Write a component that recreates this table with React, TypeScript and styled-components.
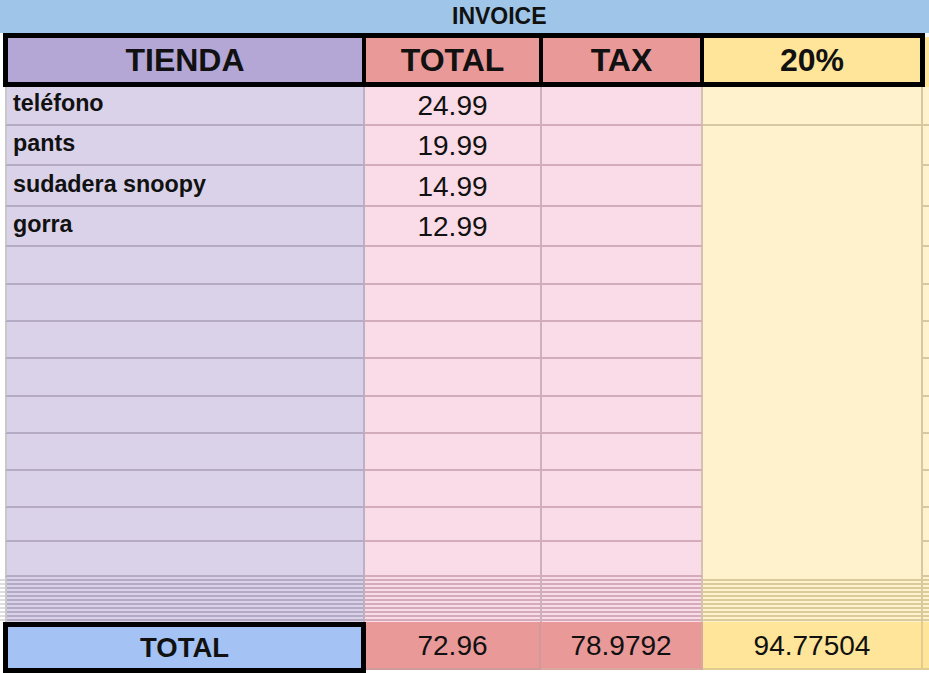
import React from 'react';
import styled, { createGlobalStyle } from 'styled-components';

const Global = createGlobalStyle`
  html, body { margin: 0; padding: 0; background: #ffffff; }
  body { font-family: "Liberation Sans", Arial, sans-serif; color: #111; }
  * { box-sizing: border-box; }
`;

const COLS = '5px 360px 177px 161px 220px 1fr';

const C = {
  blue: '#9fc5e8',
  purpleHead: '#b4a7d6',
  purple: '#d9d2e9',
  purpleLine: '#b6abc4',
  redHead: '#ea9999',
  pink: '#fadce8',
  pinkLine: '#d2acbb',
  yellowHead: '#ffe599',
  yellow: '#fff2cc',
  yellowLine: '#d8c8a0',
  totalBlue: '#a4c2f4',
  gutterLine: '#c9c9c9',
};

const Sheet = styled.div`
  width: 929px;
  height: 673px;
  overflow: hidden;
  display: flex;
  flex-direction: column;
  background: #fff;
`;

const TopBar = styled.div`
  flex: none;
  height: 33px;
  background: ${C.blue};
  display: flex;
  align-items: flex-end;
  padding: 0 0 5px 452px;
  font-size: 23px;
  line-height: 1;
  font-weight: 700;
  color: #111;
`;

const HeaderLine = styled.div`
  flex: none;
  height: 54px;
  display: flex;
`;

const Spacer = styled.div<{ $w: number }>`
  flex: none;
  width: ${(p) => p.$w}px;
`;

const HeaderGrid = styled.div`
  display: grid;
  grid-template-columns: 354px 173px 157px 216px;
  gap: 4px;
  padding: 5px;
  background: #000;
`;

const HeadCell = styled.div<{ $bg: string }>`
  background: ${(p) => p.$bg};
  display: flex;
  align-items: center;
  justify-content: center;
  font-size: 32px;
  line-height: 1;
  font-weight: 700;
  color: #111;
`;

const HeaderTail = styled.div`
  flex: 1;
  margin-top: 4px;
  background: ${C.yellowHead};
`;

const Body = styled.div<{ $rows: string }>`
  flex: none;
  display: grid;
  grid-template-columns: ${COLS};
  grid-template-rows: ${(p) => p.$rows};
`;

const Cell = styled.div<{ $bg: string; $h: string; $v?: string; $left?: boolean; $span?: number }>`
  background: ${(p) => p.$bg};
  border-bottom: 2px solid ${(p) => p.$h};
  ${(p) => (p.$v ? `border-right: 2px solid ${p.$v};` : '')}
  ${(p) => (p.$left ? `border-left: 2px solid ${C.gutterLine};` : '')}
  ${(p) => (p.$span ? `grid-row: span ${p.$span}; border-bottom: none;` : '')}
  display: flex;
  align-items: flex-end;
  min-width: 0;
`;

const GutterCell = styled.div`
  background: #fff;
`;

const Label = styled.span`
  font-size: 23.3px;
  line-height: 1;
  font-weight: 700;
  padding: 0 0 9px 6px;
  white-space: nowrap;
`;

const Num = styled.span`
  flex: 1;
  text-align: center;
  font-size: 28px;
  line-height: 1;
  font-weight: 400;
  padding-bottom: 4px;
`;

const Band = styled.div`
  flex: none;
  height: 45px;
  display: grid;
  grid-template-columns: ${COLS};
`;

const Stripe = styled.div<{ $bg: string; $line: string; $v?: string; $left?: boolean }>`
  background: repeating-linear-gradient(
    to bottom,
    ${(p) => p.$bg} 0 2px,
    ${(p) => p.$line} 2px 4px
  );
  ${(p) => (p.$v ? `border-right: 2px solid ${p.$v};` : '')}
  ${(p) => (p.$left ? `border-left: 2px solid ${C.gutterLine};` : '')}
`;

const TotalRow = styled.div`
  flex: none;
  height: 51px;
  display: grid;
  grid-template-columns: 3px 363px 175px 162px 220px 1fr;
  align-items: start;
`;

const TotalLabel = styled.div`
  height: 51px;
  border: 5px solid #000;
  background: ${C.totalBlue};
  display: flex;
  align-items: center;
  justify-content: center;
  font-size: 27.5px;
  line-height: 1;
  font-weight: 700;
`;

const TotalCell = styled.div<{ $bg: string; $line: string; $noRight?: boolean }>`
  height: 48px;
  background: ${(p) => p.$bg};
  border-bottom: 2px solid ${(p) => p.$line};
  ${(p) => (p.$noRight ? '' : `border-right: 2px solid ${p.$line};`)}
  display: flex;
  align-items: center;
  justify-content: center;
  font-size: 28px;
  line-height: 1;
  padding-top: 1px;
`;

type Row = { label?: string; total?: string; h: number };

const rows: Row[] = [
  { label: 'teléfono', total: '24.99', h: 39 },
  { label: 'pants', total: '19.99', h: 40 },
  { label: 'sudadera snoopy', total: '14.99', h: 41 },
  { label: 'gorra', total: '12.99', h: 40 },
  { h: 38 },
  { h: 37 },
  { h: 37 },
  { h: 38 },
  { h: 37 },
  { h: 37 },
  { h: 37 },
  { h: 34 },
  { h: 35 },
];

export default function App() {
  return (
    <>
      <Global />
      <Sheet>
        <TopBar>INVOICE</TopBar>
        <HeaderLine>
          <Spacer $w={3} />
          <HeaderGrid>
            <HeadCell $bg={C.purpleHead}>TIENDA</HeadCell>
            <HeadCell $bg={C.redHead}>TOTAL</HeadCell>
            <HeadCell $bg={C.redHead}>TAX</HeadCell>
            <HeadCell $bg={C.yellowHead}>20%</HeadCell>
          </HeaderGrid>
          <HeaderTail />
        </HeaderLine>
        <Body $rows={rows.map((r) => `${r.h}px`).join(' ')}>
          {rows.map((r, i) => (
            <React.Fragment key={i}>
              <GutterCell />
              <Cell $bg={C.purple} $h={C.purpleLine} $v="#bcb0c2" $left>
                {r.label && <Label>{r.label}</Label>}
              </Cell>
              <Cell $bg={C.pink} $h={C.pinkLine} $v="#ccb0bc">
                {r.total && <Num>{r.total}</Num>}
              </Cell>
              <Cell $bg={C.pink} $h={C.pinkLine} $v="#d4c2ae" />
              {i === 0 && <Cell $bg={C.yellow} $h={C.yellowLine} $v={C.yellowLine} />}
              {i === 1 && <Cell $bg={C.yellow} $h={C.yellowLine} $v={C.yellowLine} $span={rows.length - 1} />}
              <Cell $bg={C.yellow} $h={C.yellowLine} />
            </React.Fragment>
          ))}
        </Body>
        <Band>
          <Stripe $bg="#ffffff" $line="#dddddd" />
          <Stripe $bg={C.purple} $line="#b4aac4" $v="#bcb0c2" $left />
          <Stripe $bg={C.pink} $line="#d3abbb" $v="#ccb0bc" />
          <Stripe $bg={C.pink} $line="#d3abbb" $v="#d4c2ae" />
          <Stripe $bg={C.yellow} $line="#dbca9c" $v={C.yellowLine} />
          <Stripe $bg={C.yellow} $line="#dbca9c" />
        </Band>
        <TotalRow>
          <span />
          <TotalLabel>TOTAL</TotalLabel>
          <TotalCell $bg={C.redHead} $line="#cf9b9b">72.96</TotalCell>
          <TotalCell $bg={C.redHead} $line="#d8a8a0">78.9792</TotalCell>
          <TotalCell $bg={C.yellowHead} $line="#e0cc8e">94.77504</TotalCell>
          <TotalCell $bg={C.yellowHead} $line="#e0cc8e" $noRight />
        </TotalRow>
      </Sheet>
    </>
  );
}
